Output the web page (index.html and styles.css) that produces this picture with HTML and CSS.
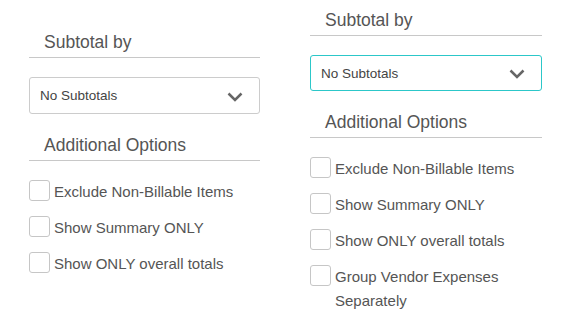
FILE: index.html
```html
<!DOCTYPE html>
<html lang="en">

<head>
  <meta charset="UTF-8">
  <meta name="viewport" content="width=device-width, initial-scale=1.0">
  <title>Report Options</title>
  <link rel="stylesheet" href="styles.css">
</head>

<body>
  <div class="options">
    <!-- 左边: 窄一点的版本 -->
    <div class="panel panel-low">
      <h3 class="panel-title">Subtotal by</h3>
      <div class="select">
        <span>No Subtotals</span>
        <svg class="select-arrow" width="16" height="10" viewBox="0 0 16 10">
          <path d="M1.5 1.5 L8 8 L14.5 1.5" />
        </svg>
      </div>
      <h3 class="panel-title">Additional Options</h3>
      <ul class="checks">
        <li><span class="box"></span><span class="label">Exclude Non-Billable Items</span></li>
        <li><span class="box"></span><span class="label">Show Summary ONLY</span></li>
        <li><span class="box"></span><span class="label">Show ONLY overall totals</span></li>
      </ul>
    </div>

    <!-- 右边: 下拉框获得焦点 -->
    <div class="panel panel-high">
      <h3 class="panel-title">Subtotal by</h3>
      <div class="select focus">
        <span>No Subtotals</span>
        <svg class="select-arrow" width="16" height="10" viewBox="0 0 16 10">
          <path d="M1.5 1.5 L8 8 L14.5 1.5" />
        </svg>
      </div>
      <h3 class="panel-title">Additional Options</h3>
      <ul class="checks">
        <li><span class="box"></span><span class="label">Exclude Non-Billable Items</span></li>
        <li><span class="box"></span><span class="label">Show Summary ONLY</span></li>
        <li><span class="box"></span><span class="label">Show ONLY overall totals</span></li>
        <li><span class="box"></span><span class="label">Group Vendor Expenses Separately</span></li>
      </ul>
    </div>
  </div>
</body>

</html>
```

FILE: styles.css
```css
html,
body {
  margin: 0;
  padding: 0;
  background-color: #fff;
  font-family: "Liberation Sans", Arial, sans-serif;
  color: #555;
}

.options {
  display: flex;
  align-items: flex-start;
  gap: 50px;
  padding-left: 29px;
}

.panel {
  width: 231px;
}

.panel-low {
  padding-top: 31px;
}

.panel-high {
  width: 232px;
  padding-top: 9px;
}

.panel-title {
  margin: 0;
  padding: 0 0 4px 15px;
  font-size: 17.5px;
  font-weight: normal;
  line-height: 22px;
  color: #555;
  border-bottom: 1px solid #c8c8c8;
}

.select {
  display: flex;
  align-items: center;
  justify-content: space-between;
  box-sizing: border-box;
  height: 37px;
  margin: 19px 0 20px;
  padding: 0 16px 0 10px;
  border: 1px solid #ccc;
  border-radius: 3px;
  font-size: 13.5px;
  color: #444;
}

.select.focus {
  height: 36px;
  border-color: #2cc7c9;
}

.select-arrow {
  margin-top: 2px;
}

.select-arrow path {
  fill: none;
  stroke: #666;
  stroke-width: 2.5;
}

.checks {
  display: flex;
  flex-direction: column;
  gap: 12px;
  margin: 19px 0 0;
  padding: 0;
  list-style: none;
}

.checks li {
  display: flex;
  align-items: flex-start;
  font-size: 15px;
  line-height: 24px;
}

.box {
  flex: none;
  box-sizing: border-box;
  width: 21px;
  height: 21px;
  margin-right: 4px;
  border: 1px solid #c6c6c6;
  border-radius: 3px;
  background-color: #fff;
}
```
